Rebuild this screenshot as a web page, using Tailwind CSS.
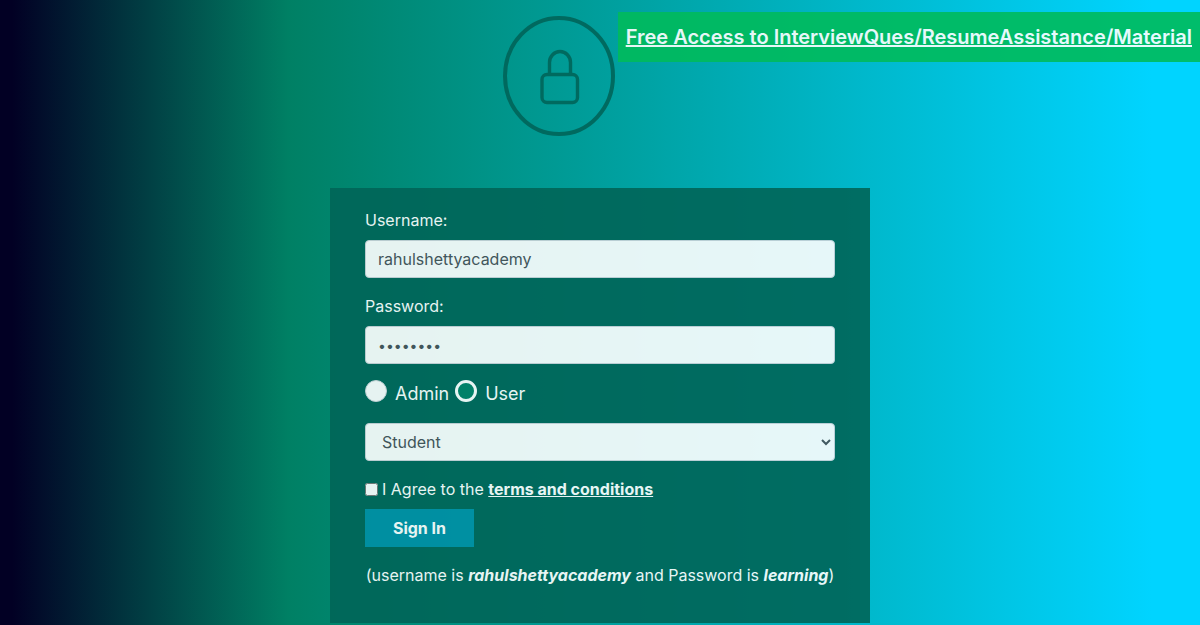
<!DOCTYPE html>
<html lang="en">
<head>
<meta charset="utf-8">
<title>Login</title>
<script src="https://cdn.jsdelivr.net/npm/@tailwindcss/browser@4"></script>
</head>
<body class="min-h-screen bg-[linear-gradient(90deg,#020024_1%,#008064_24%,#00d4ff_96%)] font-['Inter','Liberation_Sans',sans-serif] text-base text-white">
<div class="opacity-90">
  <header class="flex items-start justify-end gap-[3px] pt-3">
    <svg class="mt-1 h-[120px] w-28 shrink-0" viewBox="0 0 112 120" fill="none" stroke="#00655a" aria-hidden="true">
      <ellipse cx="56" cy="60" rx="54" ry="58" stroke-width="4"/>
      <rect x="39" y="58.500" width="35.500" height="28" rx="5" stroke-width="3.400"/>
      <path d="M46.500 58V46.500a10.500 11 0 0 1 21 0v11.500" stroke-width="3.400"/>
    </svg>
    <a href="#" class="bg-[#00bb5c] px-2 py-2.5 text-xl leading-[30px] font-semibold whitespace-nowrap underline">Free Access to InterviewQues/ResumeAssistance/Material</a>
  </header>
  <main class="mx-auto mt-[52px] mb-0.5 max-w-[540px] bg-[#006558] px-[35px] pt-5 pb-9">
    <form>
      <label for="username" class="block leading-6">Username:</label>
      <input id="username" type="text" value="rahulshettyacademy" class="mt-2 block h-[38px] w-full rounded border border-[#ced4da] bg-white px-3 text-[#495057]">
      <label for="password" class="mt-4 block leading-6">Password:</label>
      <input id="password" type="password" value="learning" class="mt-2 block h-[38px] w-full rounded border border-[#ced4da] bg-white px-3 text-sm text-[#495057]">
      <div class="mt-4 flex h-[27px] gap-1.5 text-lg leading-[27px]">
        <label class="flex gap-2"><input type="radio" name="role" class="size-[22px] appearance-none rounded-full border border-[#d1d7dc] bg-white checked:bg-[#008066]">Admin</label>
        <label class="flex gap-2"><input type="radio" name="role" checked class="size-[22px] appearance-none rounded-full border-3 border-white bg-white checked:bg-[#008066]">User</label>
      </div>
      <select aria-label="Role" class="mt-4 block h-[38px] w-full rounded border border-[#ced4da] bg-white px-3 text-[#495057]">
        <option>Student</option>
        <option>Teacher</option>
        <option>Consultant</option>
      </select>
      <div class="mt-4 flex items-center gap-1 leading-6">
        <input id="terms" type="checkbox" class="size-[13px]">
        <label for="terms">I Agree to the <a href="#" class="font-bold underline">terms and conditions</a></label>
      </div>
      <button type="submit" class="mt-2 h-[38px] w-[109px] bg-[#0090a6] font-bold">Sign In</button>
      <p class="mt-4 text-center leading-6 whitespace-nowrap">(username is <b><i>rahulshettyacademy</i></b> and Password is <b><i>learning</i></b>)</p>
    </form>
  </main>
</div>
</body>
</html>
